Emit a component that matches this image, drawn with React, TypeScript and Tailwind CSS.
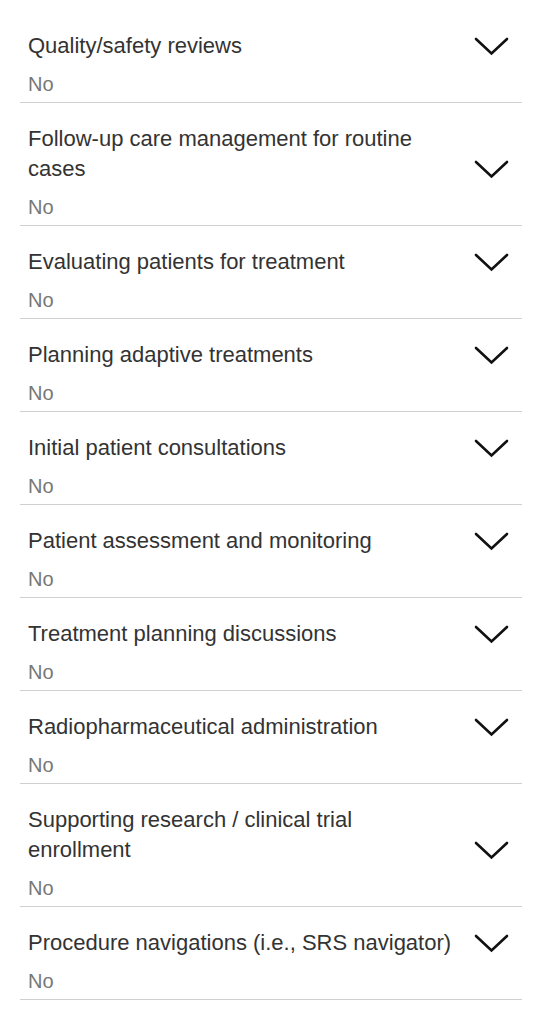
import React from "react";

const items: string[] = [
  "Quality/safety reviews",
  "Follow-up care management for routine cases",
  "Evaluating patients for treatment",
  "Planning adaptive treatments",
  "Initial patient consultations",
  "Patient assessment and monitoring",
  "Treatment planning discussions",
  "Radiopharmaceutical administration",
  "Supporting research / clinical trial enrollment",
  "Procedure navigations (i.e., SRS navigator)",
];

function Chevron() {
  return (
    <svg width="35" height="19" viewBox="0 0 35 19" fill="none" aria-hidden="true">
      <polyline
        points="2,2 17.5,16.5 33,2"
        stroke="#111111"
        strokeWidth="2.6"
        strokeLinecap="round"
        strokeLinejoin="miter"
        fill="none"
      />
    </svg>
  );
}

export default function App() {
  return (
    <div
      className="min-h-[1024px] w-full bg-white pt-[10px]"
      style={{ fontFamily: '"Liberation Sans", Arial, Helvetica, sans-serif' }}
    >
      {items.map((t) => (
        <div key={t} className="mx-[20px] border-b border-[#d0d0d0] pl-[8px] pr-[13px] pt-[21px] pb-[6px]">
          <div className="flex items-end gap-[16px]">
            <div className="flex-1 text-[22px] leading-[30px] text-[#333333]">{t}</div>
            <div className="flex h-[30px] w-[35px] shrink-0 items-center justify-center">
              <Chevron />
            </div>
          </div>
          <div className="mt-[11px] text-[20px] leading-[24px] text-[#777777]">No</div>
        </div>
      ))}
    </div>
  );
}
